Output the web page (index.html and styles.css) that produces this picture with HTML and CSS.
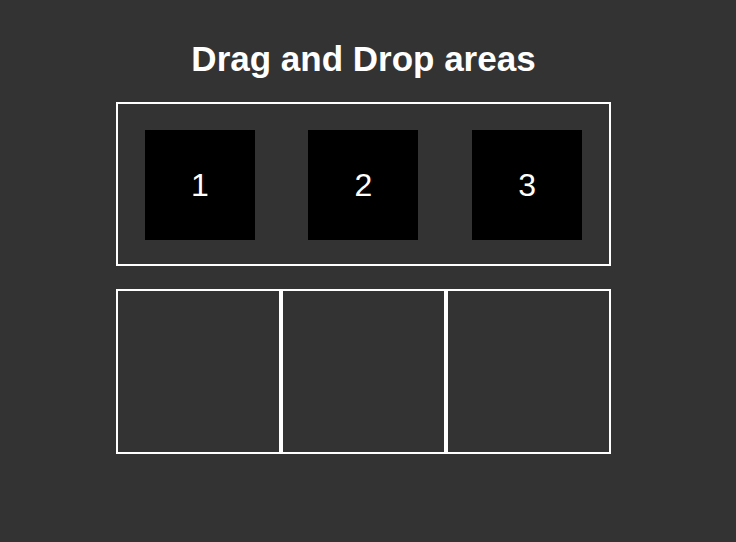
FILE: index.html
```html
<!DOCTYPE html>
<html>
<head>
<meta charset="utf-8">
<link rel="stylesheet" href="styles.css">
</head>
<body>
<div class="page">
  <h1 class="title">Drag and Drop areas</h1>
  <div class="source">
    <div class="item">1</div>
    <div class="item">2</div>
    <div class="item">3</div>
  </div>
  <div class="targets">
    <div class="slot"></div>
    <div class="slot"></div>
    <div class="slot"></div>
  </div>
</div>
</body>
</html>
```
FILE: styles.css
```css
html, body {
  margin: 0;
  padding: 0;
  background: #333333;
}
body {
  font-family: "Liberation Sans", Arial, sans-serif;
  color: #ffffff;
  height: 542px;
}
.page {
  width: 727px;
  display: flex;
  flex-direction: column;
  align-items: center;
  padding-top: 39px;
}
.title {
  margin: 0;
  font-size: 35px;
  font-weight: bold;
  line-height: 40px;
}
.source {
  margin-top: 23px;
  width: 495px;
  height: 164px;
  box-sizing: border-box;
  border: 2px solid #ffffff;
  padding-top: 2px;
  display: flex;
  justify-content: space-around;
  align-items: center;
}
.item {
  width: 110px;
  height: 110px;
  background: #000000;
  display: flex;
  align-items: center;
  justify-content: center;
  font-size: 32px;
}
.targets {
  margin-top: 23px;
  width: 495px;
  display: flex;
}
.slot {
  width: 165px;
  height: 165px;
  box-sizing: border-box;
  border: 2px solid #ffffff;
}
```
